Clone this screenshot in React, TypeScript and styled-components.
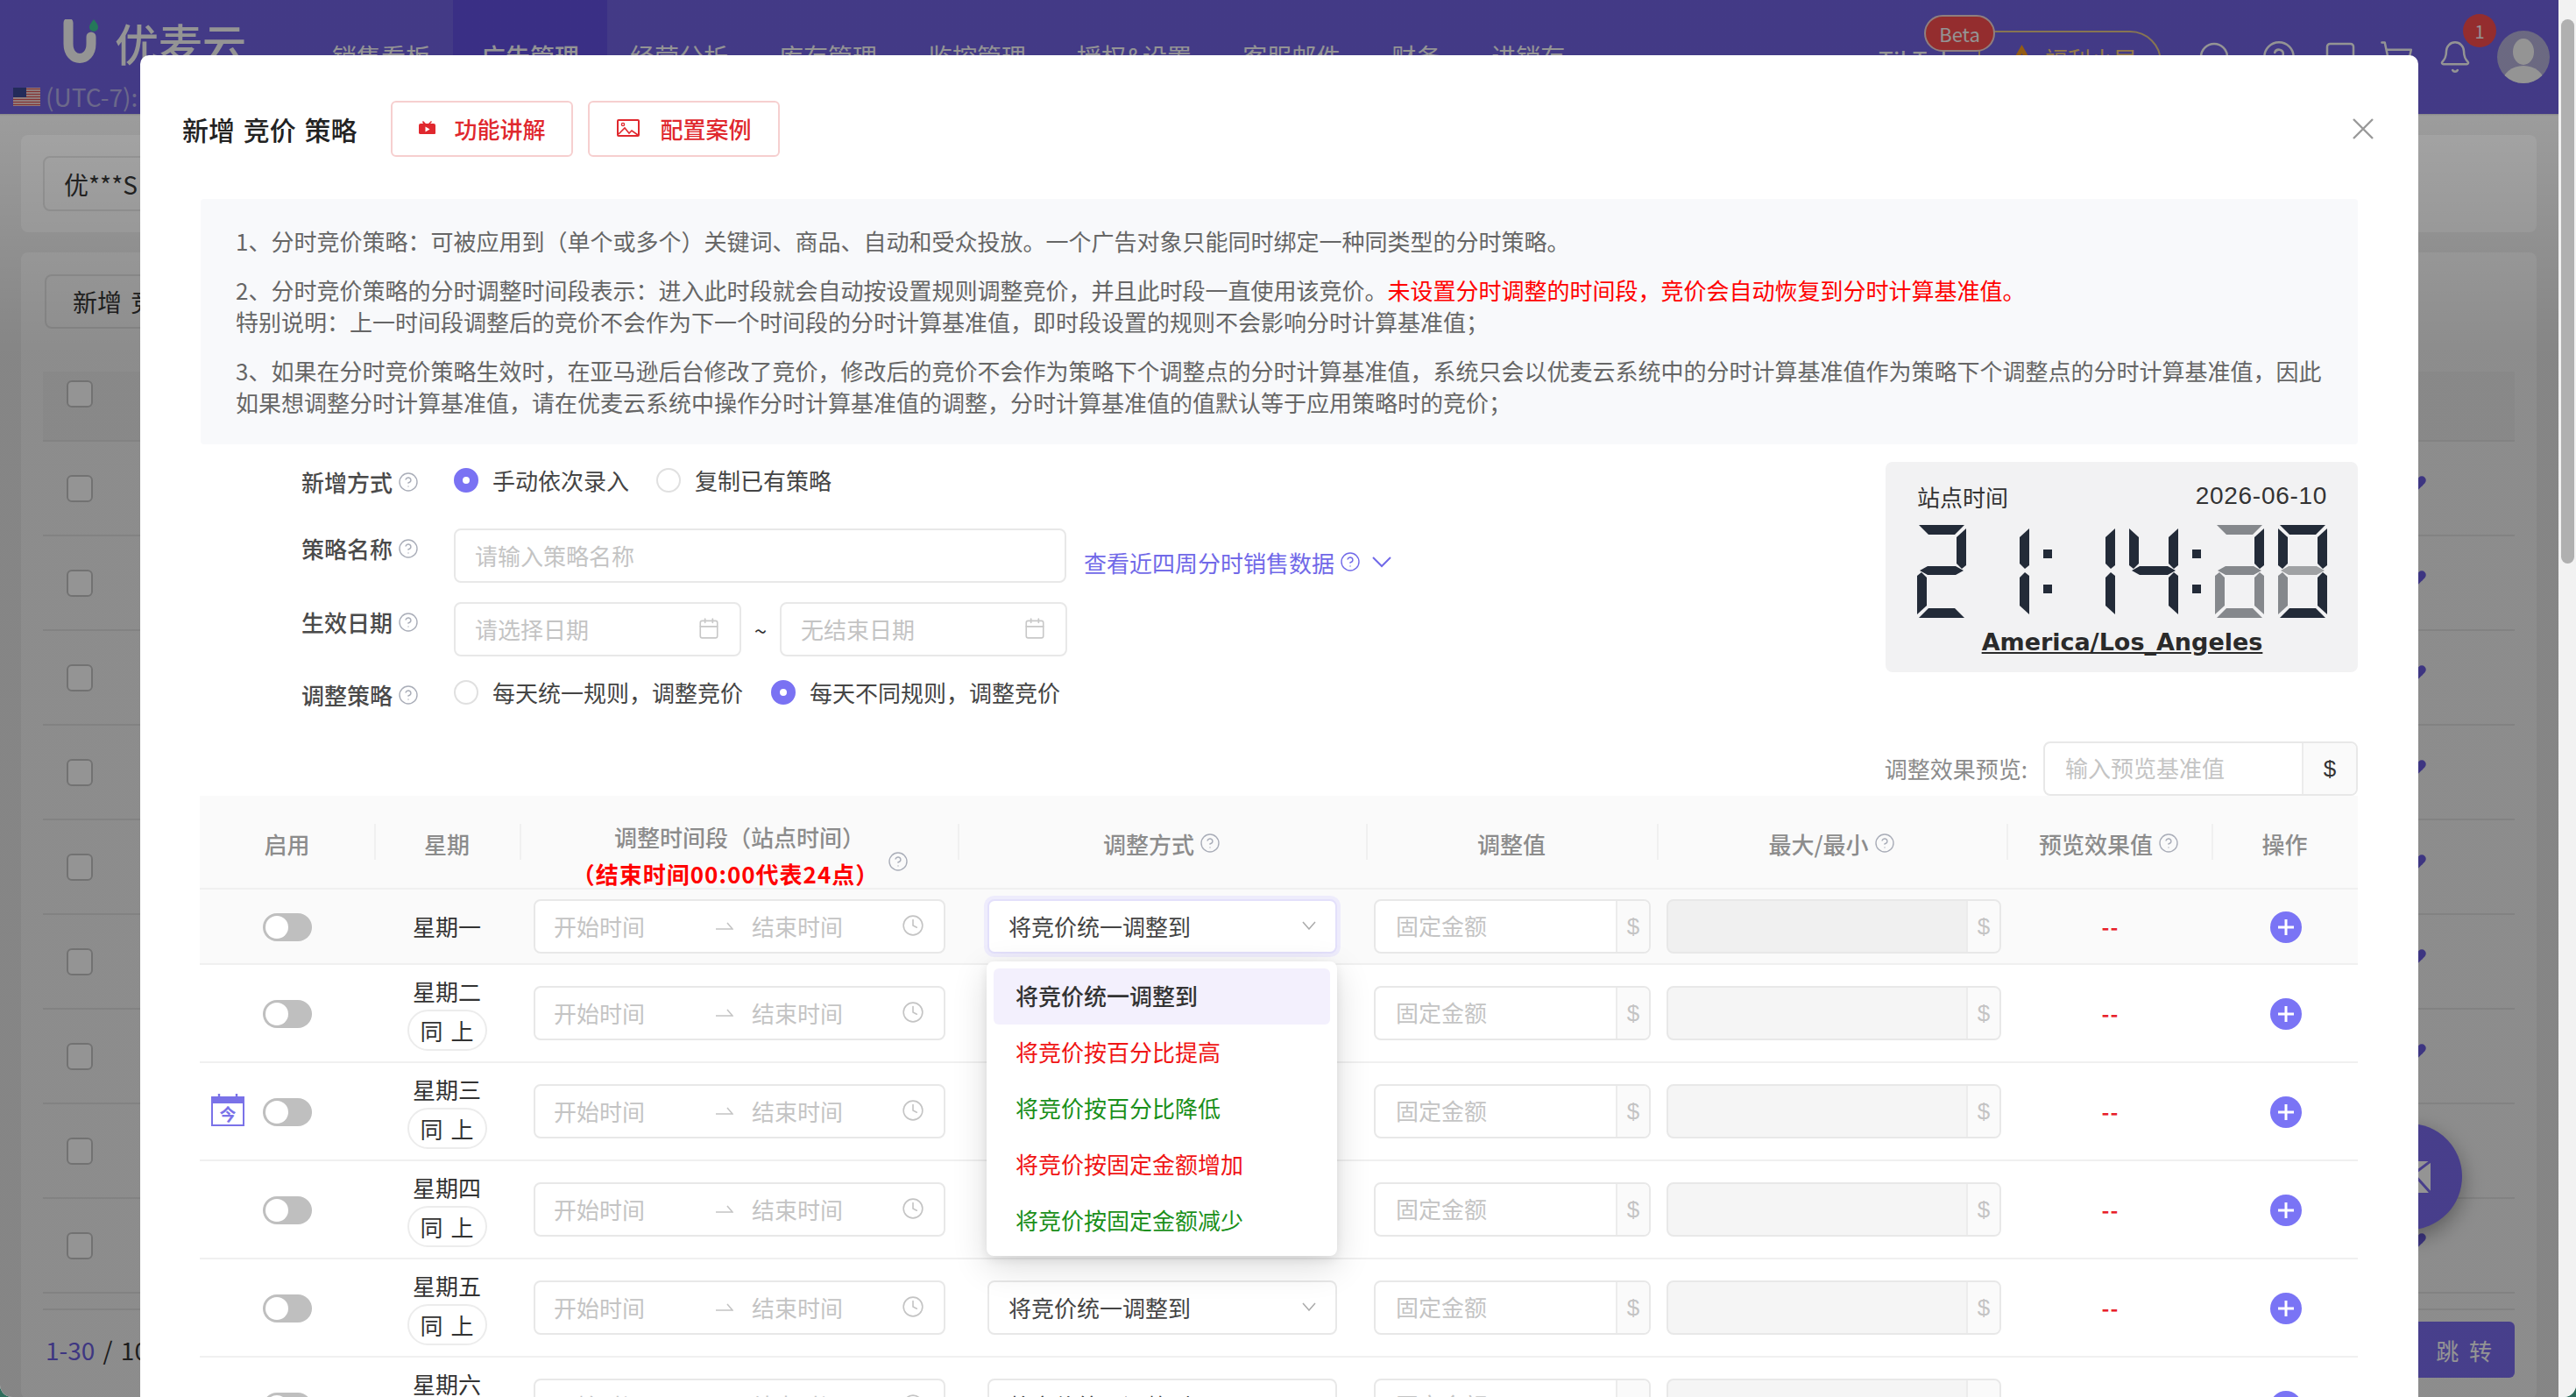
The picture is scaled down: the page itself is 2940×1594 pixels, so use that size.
import React from "react";
import styled, { createGlobalStyle } from "styled-components";
import { Bell, Calendar, CircleHelp, Clock, Headphones, Pencil, ShoppingCart, SquareMinus } from "lucide-react";

const Global = createGlobalStyle`
  html, body { margin: 0; padding: 0; width: 2940px; height: 1594px; overflow: hidden; }
  * { box-sizing: border-box; }
  body { font-family: "Noto Sans CJK SC", "Liberation Sans", sans-serif; font-size: 26px; color: #333; }
`;

const Window = styled.div`
  position: relative; width: 2940px; height: 1594px; overflow: hidden; background: #2f6d5c;
`;
const Screen = styled.div`
  display: grid; grid-template-columns: 2920px 20px; height: 1594px;
  border-radius: 0 0 14px 14px; overflow: hidden; background: #f2f2f2;
`;
const Main = styled.div`position: relative; height: 1594px; overflow: hidden; background: #e6e6e6;`;
const Scrollbar = styled.div`padding: 22px 2px 0 3px; background: #f2f2f2;`;
const ScrollThumb = styled.div`height: 621px; border-radius: 8px; background: #b0b0b0;`;

/* ---------- page behind the dialog ---------- */
const TopBar = styled.header`display: flex; height: 130px; background: #7364e7; color: #fff;`;
const Brand = styled.div`width: 350px; flex: none; display: flex; flex-direction: column;`;
const LogoRow = styled.div`display: flex; align-items: flex-start; gap: 18px; padding: 22px 0 0 72px; height: 90px;`;
const LogoText = styled.span`font-size: 50px; line-height: 52px; font-weight: 500;`;
const ZoneRow = styled.div`display: flex; align-items: center; gap: 6px; padding-left: 15px; font-size: 28px; color: #b9b4ee;`;
const Nav = styled.nav`display: flex; height: 130px;`;
const NavItem = styled.div<{ $active?: boolean }>`
  padding: 46px ${(p) => (p.$active ? 32 : 29)}px 0; margin: 0 ${(p) => (p.$active ? -3 : 0)}px;
  font-size: 28px; line-height: 36px; font-weight: ${(p) => (p.$active ? 500 : 400)};
  background: ${(p) => (p.$active ? "#6451e5" : "transparent")}; white-space: nowrap;
`;
const Tools = styled.div`display: flex; align-items: flex-start; margin-left: auto; padding-right: 10px;`;
const TikTok = styled.span`margin: 50px 0 0 0; font-size: 28px; line-height: 36px; width: 114px; white-space: nowrap;`;
const Welfare = styled.div`
  position: relative; display: flex; align-items: flex-start; gap: 14px; width: 209px; height: 80px; margin: 35px 40px 0 0;
  padding: 12px 0 0 35px; border: 2px solid #e8c98d; border-radius: 0 36px 0 0; color: #ffd27a; font-size: 26px; line-height: 36px;
  white-space: nowrap;
`;
const BetaBadge = styled.span`
  position: absolute; left: -64px; top: -20px; width: 81px; height: 42px; border-radius: 21px;
  display: flex; align-items: center; justify-content: center;
  background: #ff4d4f; border: 2px solid #f6d9d9; color: #fff; font-size: 22px;
`;
const ToolIcons = styled.div`display: flex; padding-top: 45px;`;
const ToolSlot = styled.span<{ $w: number }>`display: block; width: ${(p) => p.$w}px; height: 40px;`;
const BellWrap = styled.span`position: relative; display: block; width: 40px; height: 40px;`;
const BellBadge = styled.span`
  position: absolute; right: -27px; top: -29px; width: 38px; height: 38px; border-radius: 50%;
  display: flex; align-items: center; justify-content: center; background: #ff4d4f; color: #fff; font-size: 20px;
`;
const Avatar = styled.span`
  display: block; width: 60px; height: 60px; margin: 35px 0 0 28px; border-radius: 50%; overflow: hidden; background: #b9b5df;
`;
const BgCard = styled.div<{ $top: number }>`
  margin: ${(p) => p.$top}px 25px 0 24px; padding: 24px 25px; background: #f2f2f2; border-radius: 8px; font-size: 28px;
`;
const BgInput = styled.div`
  width: 320px; height: 63px; padding-left: 22px; display: flex; align-items: center;
  border: 2px solid #dcdcdc; border-radius: 8px; background: #f2f2f2;
`;
const BgButton = styled.div`
  width: 240px; height: 62px; margin: 1px 0 21px 2px; padding-left: 30px; display: flex; align-items: center;
  border: 2px solid #dcdcdc; border-radius: 8px; word-spacing: 4px; white-space: nowrap;
`;
const BgRow = styled.div<{ $head?: boolean }>`
  display: flex; align-items: center; justify-content: space-between; height: 108px; padding: 0 100px 0 27px;
  border-bottom: 2px solid #e0e0e0;
  background: ${(p) => (p.$head ? "linear-gradient(180deg, transparent 28px, #ebebeb 28px)" : "transparent")};
`;
const BgEnd = styled.div`height: 19px; border-bottom: 2px solid #e0e0e0;`;
const BgCheck = styled.span`width: 30px; height: 31px; border: 2px solid #c4c4c4; border-radius: 6px; background: #fff;`;
const BgFooter = styled.div`display: flex; align-items: center; justify-content: space-between; margin: 13px 0 0 3px; font-size: 28px; word-spacing: 3px;`;
const BgPage = styled.span`color: #6a5ddf; & b { color: #333; font-weight: 400; }`;
const JumpButton = styled.span`
  width: 130px; height: 64px; display: flex; align-items: center; justify-content: flex-end; padding-right: 26px;
  border-radius: 6px; background: #7b6cf0; color: #fff; font-size: 26px; word-spacing: 6px;
`;
const Floater = styled.div`
  position: absolute; left: 2689px; top: 1282px; width: 121px; height: 121px; border-radius: 50%;
  display: flex; align-items: center; justify-content: center; background: #7b6af0; box-shadow: 0 8px 24px rgba(0,0,0,.35);
`;
const Dim = styled.div`
  position: absolute; inset: 0;
  background: linear-gradient(180deg, rgba(0,0,0,.42) 130px, rgba(0,0,0,.32) 132px, rgba(0,0,0,.42) 400px);
`;

/* ---------- dialog ---------- */
const Modal = styled.section`
  position: absolute; left: 160px; top: 63px; width: 2600px; height: 1620px; border-radius: 10px; background: #fff;
`;
const ModalHead = styled.div`display: flex; align-items: center; height: 164px; padding: 52px 51px 48px 48px;`;
const Title = styled.h2`margin: 0 38px 0 0; font-size: 30px; line-height: 64px; font-weight: 500; color: #222; word-spacing: 3px;`;
const GhostButton = styled.button<{ $w: number; $gap: number }>`
  display: flex; align-items: center; gap: ${(p) => p.$gap}px; width: ${(p) => p.$w}px; height: 64px; margin-right: 17px;
  padding: 0 0 2px 30px; border: 2px solid #f6cfcf; border-radius: 6px; background: #fff; color: #e0282e;
  font: 500 26px "Noto Sans CJK SC", sans-serif; white-space: nowrap;
`;
const CloseIcon = styled.svg`margin-left: auto; flex: none;`;
const ModalBody = styled.div`padding: 0 69px;`;
const Notice = styled.div`
  height: 280px; padding: 30px 30px 0 40px; background: #f8f9fb; border-radius: 4px; color: #666; font-size: 26px; line-height: 36px;
`;
const NoticeP = styled.p`margin: 0 0 20px; white-space: nowrap;`;
const Red = styled.span`color: #f00;`;
const FormArea = styled.div`display: flex; justify-content: space-between; height: 338px;`;
const FormCol = styled.div`padding: 23px 0 0 115px;`;
const FormRow = styled.div<{ $h: number; $mb: number }>`
  display: flex; align-items: center; height: ${(p) => p.$h}px; margin-bottom: ${(p) => p.$mb}px;
`;
const FormLabel = styled.label<{ $pad: number }>`
  display: flex; align-items: center; gap: 6px; align-self: flex-start; width: 174px; flex: none;
  padding-top: ${(p) => p.$pad}px; font-weight: 500; color: #4a4a4a; line-height: 36px;
`;
const RadioItem = styled.span<{ $mr: number }>`
  display: flex; align-items: center; gap: 16px; margin-right: ${(p) => p.$mr}px; color: #444; white-space: nowrap;
  padding-bottom: 2px;
`;
const RadioDot = styled.span<{ $on?: boolean }>`
  width: 28px; height: 28px; flex: none; border-radius: 50%; background: #fff; margin-top: 2px;
  border: ${(p) => (p.$on ? "10px solid #7a72f3" : "2px solid #e0e0e0")};
`;
const Field = styled.div<{ $w: number }>`
  display: flex; align-items: center; justify-content: space-between; width: ${(p) => p.$w}px; height: 62px; padding: 0 22px 2px;
  border: 2px solid #e8e8e8; border-radius: 8px; background: #fff; color: #c4c4c4; white-space: nowrap;
`;
const Tilde = styled.span`width: 44px; text-align: center; color: #333;`;
const SalesLink = styled.a`
  display: flex; align-items: center; gap: 6px; margin: 14px 0 0 20px; color: #7169e8; white-space: nowrap;
`;
const ClockBox = styled.div`
  width: 539px; height: 240px; margin-top: 20px; padding: 19px 35px 0 36px; border-radius: 8px; background: #f2f2f3; color: #333;
`;
const ClockHead = styled.div`display: flex; align-items: center; justify-content: space-between; height: 40px; margin-bottom: 13px;`;
const ClockDate = styled.span`font: 28px "Liberation Sans", sans-serif; letter-spacing: .7px;`;
const Digits = styled.div`display: flex; gap: 16px; height: 106px;`;
const DigitSvg = styled.svg`display: block; flex: none;`;
const Colon = styled.span`display: flex; flex-direction: column; gap: 30px; padding-top: 28px; width: 10px;`;
const ColonDot = styled.i`display: block; width: 10px; height: 10px; background: #232b38;`;
const Zone = styled.div`
  margin-top: 9px; text-align: center; font: 700 27px/38px "DejaVu Sans", sans-serif; color: #2a2a2a; text-decoration: underline; white-space: nowrap;
`;
const PreviewRow = styled.div`display: flex; align-items: center; justify-content: flex-end; gap: 18px; height: 63px; color: #8c8c8c;`;
const AddonInput = styled.div<{ $w: number; $fill?: boolean }>`
  display: flex; width: ${(p) => p.$w}px; height: 62px; border: 2px solid #e8e8e8; border-radius: 8px; overflow: hidden;
  background: ${(p) => (p.$fill ? "rgba(0,0,0,.04)" : "#fff")}; white-space: nowrap; color: #c4c4c4;
`;
const AddonText = styled.span<{ $pad: number }>`flex: 1; padding-left: ${(p) => p.$pad}px; line-height: 56px;`;
const Addon = styled.span<{ $dark?: boolean; $w: number }>`
  width: ${(p) => p.$w}px; flex: none; text-align: center; line-height: 58px; border-left: 2px solid #ececec;
  background: #fafafa; color: ${(p) => (p.$dark ? "#333" : "#c4c4c4")}; font-family: "Liberation Sans", sans-serif;
`;

const cols = "199px 166px 500px 466px 332px 399px 234px 167px";
const Table = styled.div`width: 2463px; margin-left: -1px;`;
const HeadRow = styled.div`
  display: grid; grid-template-columns: ${cols}; grid-template-rows: 105px; height: 107px; background: #fafafa;
  border-bottom: 2px solid #f0f0f0; color: #8c8c8c; font-weight: 500;
`;
const HeadCell = styled.div<{ $sep?: boolean }>`
  position: relative; display: flex; align-items: center; justify-content: center; gap: 6px; padding-top: 3px; white-space: nowrap;
  ${(p) => p.$sep && `&::before { content: ""; position: absolute; left: 0; top: 32px; height: 41px; width: 2px; background: #f0f0f0; }`}
`;
const TimeHead = styled.div`
  display: flex; flex-direction: column; align-items: center; align-self: flex-start; margin: 23px 0 0 -14px; line-height: 42px;
`;
const TimeHeadTop = styled.span`margin-left: 16px;`;
const TimeHeadHelp = styled.span`position: absolute; left: 420px; top: 63px; line-height: 0;`;
const RedHead = styled.span`color: #f00; font-weight: 700; letter-spacing: 1px; margin-right: 16px;`;
const Row = styled.div<{ $first?: boolean }>`
  display: grid; grid-template-columns: ${cols}; height: ${(p) => (p.$first ? 86 : 112)}px;
  border-bottom: 2px solid #f0f0f0; background: ${(p) => (p.$first ? "#fafafa" : "#fff")};
`;
const Cell = styled.div<{ $pl?: number; $start?: boolean }>`
  position: relative; display: flex; align-items: center; justify-content: ${(p) => (p.$start ? "flex-start" : "center")};
  padding-left: ${(p) => p.$pl ?? 0}px;
`;
const Toggle = styled.span`
  display: block; width: 56px; height: 32px; margin-top: 2px; padding: 3px; border-radius: 16px; background: #bfbfbf;
  &::after { content: ""; display: block; width: 26px; height: 26px; border-radius: 50%; background: #fff; }
`;
const TodayIcon = styled.svg`position: absolute; left: 13px; top: 34px;`;
const Week = styled.div`display: flex; flex-direction: column; align-items: center; gap: 3px; line-height: 36px; color: #333;`;
const Same = styled.span`
  width: 91px; height: 47px; display: flex; align-items: center; justify-content: center; gap: 9px;
  border: 2px solid #ececec; border-radius: 24px; background: #fff; line-height: 1;
`;
const TimeInput = styled.div`
  display: grid; grid-template-columns: 185px 20px 1fr 26px; align-items: center; width: 470px; height: 62px; padding: 0 22px 2px 21px;
  border: 2px solid #e8e8e8; border-radius: 8px; background: #fff; color: #c4c4c4; white-space: nowrap;
`;
const EndText = styled.span`padding-left: 21px;`;
const SelectBox = styled.div<{ $focus?: boolean }>`
  position: relative; display: flex; align-items: center; justify-content: space-between; width: 399px; height: 62px; padding: 0 22px 2px 22px;
  border: 2px solid ${(p) => (p.$focus ? "#e3e0fb" : "#e8e8e8")}; border-radius: 8px; background: #fff; color: #444; white-space: nowrap;
  box-shadow: ${(p) => (p.$focus ? "0 0 0 4px #eeecfc" : "none")};
`;
const Menu = styled.div`
  position: absolute; left: -3px; top: 69px; z-index: 5; width: 400px; padding: 8px; border-radius: 8px; background: #fff;
  box-shadow: 0 12px 40px rgba(0,0,0,.14), 0 4px 12px rgba(0,0,0,.08);
`;
const MenuItem = styled.div<{ $tone: string; $on?: boolean }>`
  height: 64px; padding-left: 25px; line-height: 62px; border-radius: 6px; white-space: nowrap;
  color: ${(p) => p.$tone}; font-weight: ${(p) => (p.$on ? 500 : 400)}; background: ${(p) => (p.$on ? "#f3f0fd" : "transparent")};
`;
const Dash = styled.span`margin-left: 3px; padding-bottom: 2px; color: #e8202a; font-weight: 700; font-size: 24px; letter-spacing: 1px;`;
const Plus = styled.span`
  display: flex; align-items: center; justify-content: center; width: 36px; height: 36px; margin: 2px 0 0 2px; border-radius: 50%; background: #7a74f5;
`;

const SEG: Record<string, string> = {
  t: "2,0 54,0 43,11 13,11",
  ul: "0,4 11,14 11,44 5,50 0,46",
  ur: "56,4 45,14 45,44 51,50 56,46",
  m: "3,52 12,47 44,47 53,52 44,57 12,57",
  ll: "0,58 5,54 11,60 11,92 0,102",
  lr: "56,58 51,54 45,60 45,92 56,102",
  b: "13,95 43,95 54,106 2,106",
};
const D = "#232b38";
const G = "#85888c";
const L = "#a0a2a4";

function Digit({ on }: { on: Record<string, string> }) {
  return (
    <DigitSvg width="56" height="106" viewBox="0 0 56 106">
      {Object.keys(on).map((k) => (
        <polygon key={k} points={SEG[k]} fill={on[k]} />
      ))}
    </DigitSvg>
  );
}

const Help = () => <CircleHelp size={24} color="#a9adb8" strokeWidth={1.4} />;
const CalIcon = () => <Calendar size={26} color="#c8c8c8" strokeWidth={1.5} />;

const weeks = ["星期一", "星期二", "星期三", "星期四", "星期五", "星期六"];
const options = [
  { t: "将竞价统一调整到", c: "#333", on: true },
  { t: "将竞价按百分比提高", c: "#f01414" },
  { t: "将竞价按百分比降低", c: "#1a8f1a" },
  { t: "将竞价按固定金额增加", c: "#f01414" },
  { t: "将竞价按固定金额减少", c: "#1a8f1a" },
];

export default function App() {
  return (
    <Window>
      <Global />
      <Screen>
        <Main>
          <TopBar>
            <Brand>
              <LogoRow>
                <svg width="41" height="50" viewBox="0 0 41 50">
                  <path d="M6 4v24c0 22 26 22 26 0V20" fill="none" stroke="#fff" strokeWidth="11" strokeLinecap="round" />
                  <path d="M35 0c3 4 5 6 5 9a5 5 0 0 1-10 0c0-3 2-5 5-9z" fill="#3fcf9a" />
                </svg>
                <LogoText>优麦云</LogoText>
              </LogoRow>
              <ZoneRow>
                <svg width="31" height="21" viewBox="0 0 31 21">
                  <rect width="31" height="21" fill="#fff" />
                  <path d="M0 1.5h31M0 4.5h31M0 7.5h31M0 10.5h31M0 13.5h31M0 16.5h31M0 19.5h31" stroke="#e25555" strokeWidth="1.6" />
                  <rect width="15" height="11" fill="#3c4a9a" />
                </svg>
                (UTC-7): 09:00
              </ZoneRow>
            </Brand>
            <Nav>
              <NavItem>销售看板</NavItem>
              <NavItem $active>广告管理</NavItem>
              <NavItem>经营分析</NavItem>
              <NavItem>库存管理</NavItem>
              <NavItem>监控管理</NavItem>
              <NavItem>授权&amp;设置</NavItem>
              <NavItem>客服邮件</NavItem>
              <NavItem>财务</NavItem>
              <NavItem>进销存</NavItem>
            </Nav>
            <Tools>
              <TikTok>TikTok</TikTok>
              <Welfare>
                <svg width="25" height="30" viewBox="0 0 25 30" style={{ marginTop: 2 }}>
                  <path d="M12.5 0L25 22h-6l-6.500-12L6 22H0z" fill="#ff9f20" />
                  <path d="M12.500 14l6 10H6.500z" fill="#ff9f20" />
                </svg>
                福利小屋
                <BetaBadge>Beta</BetaBadge>
              </Welfare>
              <ToolIcons>
                <ToolSlot $w={74}>
                  <Headphones size={40} strokeWidth={1.5} />
                </ToolSlot>
                <ToolSlot $w={70}>
                  <CircleHelp size={40} strokeWidth={1.5} />
                </ToolSlot>
                <ToolSlot $w={64}>
                  <SquareMinus size={40} strokeWidth={1.5} />
                </ToolSlot>
                <ToolSlot $w={67}>
                  <ShoppingCart size={40} strokeWidth={1.5} />
                </ToolSlot>
                <BellWrap>
                  <Bell size={40} strokeWidth={1.5} />
                  <BellBadge>1</BellBadge>
                </BellWrap>
              </ToolIcons>
              <Avatar>
                <svg width="60" height="60" viewBox="0 0 60 60">
                  <ellipse cx="30" cy="24" rx="12" ry="15" fill="#fff" />
                  <ellipse cx="30" cy="60" rx="24" ry="20" fill="#fff" />
                </svg>
              </Avatar>
            </Tools>
          </TopBar>
          <BgCard $top={24}>
            <BgInput>优***S</BgInput>
          </BgCard>
          <BgCard $top={23}>
            <BgButton>新增 竞价策略</BgButton>
            {Array.from({ length: 10 }).map((_, i) => (
              <BgRow key={i} $head={i === 0}>
                <BgCheck />
                {i > 0 && <Pencil size={30} color="#6a5ddf" fill="#6a5ddf" />}
              </BgRow>
            ))}
            <BgEnd />
            <BgFooter>
              <BgPage>
                1-30 <b>/ 100</b>
              </BgPage>
              <JumpButton>跳 转</JumpButton>
            </BgFooter>
          </BgCard>
          <Floater>
            <svg width="48" height="36" viewBox="0 0 48 36">
              <rect width="48" height="36" rx="3" fill="#fff" />
              <path d="M0 0l24 18L48 0M0 36l18-20M48 36L30 16" fill="none" stroke="#7b6af0" strokeWidth="3" />
            </svg>
          </Floater>
          <Dim />
          <Modal>
            <ModalHead>
              <Title>新增 竞价 策略</Title>
              <GhostButton $w={208} $gap={22}>
                <svg width="19" height="16" viewBox="0 0 19 16">
                  <path d="M5 0l3 3h3l3-3 1 1-2 2h4a2 2 0 0 1 2 2v9a1 1 0 0 1-1 1H2a2 2 0 0 1-2-1V5a2 2 0 0 1 2-2h3L4 1z" fill="#e0282e" />
                  <path d="M7.5 6.500v6l5-3z" fill="#fff" />
                </svg>
                功能讲解
              </GhostButton>
              <GhostButton $w={219} $gap={24}>
                <svg width="26" height="20" viewBox="0 0 26 20" style={{ marginLeft: 1 }}>
                  <rect x="1" y="1" width="24" height="18" rx="1" fill="none" stroke="#e0282e" strokeWidth="2" />
                  <circle cx="7" cy="6" r="1.6" fill="none" stroke="#e0282e" strokeWidth="1.4" />
                  <path d="M2 17l7-7 5 6 3-3 7 5" fill="none" stroke="#e0282e" strokeWidth="1.6" />
                </svg>
                配置案例
              </GhostButton>
              <CloseIcon width="24" height="24" viewBox="0 0 24 24">
                <path d="M1 1l22 22M23 1L1 23" stroke="#999" strokeWidth="2.4" fill="none" />
              </CloseIcon>
            </ModalHead>
            <ModalBody>
              <Notice>
                <NoticeP>1、分时竞价策略：可被应用到（单个或多个）关键词、商品、自动和受众投放。一个广告对象只能同时绑定一种同类型的分时策略。</NoticeP>
                <NoticeP>
                  2、分时竞价策略的分时调整时间段表示：进入此时段就会自动按设置规则调整竞价，并且此时段一直使用该竞价。
                  <Red>未设置分时调整的时间段，竞价会自动恢复到分时计算基准值。</Red>
                  <br />
                  特别说明：上一时间段调整后的竞价不会作为下一个时间段的分时计算基准值，即时段设置的规则不会影响分时计算基准值；
                </NoticeP>
                <NoticeP>
                  3、如果在分时竞价策略生效时，在亚马逊后台修改了竞价，修改后的竞价不会作为策略下个调整点的分时计算基准值，系统只会以优麦云系统中的分时计算基准值作为策略下个调整点的分时计算基准值，因此
                  <br />
                  如果想调整分时计算基准值，请在优麦云系统中操作分时计算基准值的调整，分时计算基准值的值默认等于应用策略时的竞价；
                </NoticeP>
              </Notice>
              <FormArea>
                <FormCol>
                  <FormRow $h={36} $mb={37}>
                    <FormLabel $pad={2}>
                      新增方式 <Help />
                    </FormLabel>
                    <RadioItem $mr={31}>
                      <RadioDot $on />
                      手动依次录入
                    </RadioItem>
                    <RadioItem $mr={0}>
                      <RadioDot />
                      复制已有策略
                    </RadioItem>
                  </FormRow>
                  <FormRow $h={62} $mb={22}>
                    <FormLabel $pad={5}>
                      策略名称 <Help />
                    </FormLabel>
                    <Field $w={699}>请输入策略名称</Field>
                    <SalesLink>
                      查看近四周分时销售数据
                      <CircleHelp size={24} color="#7169e8" strokeWidth={1.4} />
                      <svg width="24" height="14" viewBox="0 0 24 14" style={{ marginLeft: 6 }}>
                        <path d="M2 2l10 10L22 2" fill="none" stroke="#7169e8" strokeWidth="2" />
                      </svg>
                    </SalesLink>
                  </FormRow>
                  <FormRow $h={62} $mb={23}>
                    <FormLabel $pad={5}>
                      生效日期 <Help />
                    </FormLabel>
                    <Field $w={328}>
                      请选择日期
                      <CalIcon />
                    </Field>
                    <Tilde>~</Tilde>
                    <Field $w={328}>
                      无结束日期
                      <CalIcon />
                    </Field>
                  </FormRow>
                  <FormRow $h={36} $mb={0}>
                    <FormLabel $pad={3}>
                      调整策略 <Help />
                    </FormLabel>
                    <RadioItem $mr={32}>
                      <RadioDot />
                      每天统一规则，调整竞价
                    </RadioItem>
                    <RadioItem $mr={0}>
                      <RadioDot $on />
                      每天不同规则，调整竞价
                    </RadioItem>
                  </FormRow>
                </FormCol>
                <ClockBox>
                  <ClockHead>
                    站点时间
                    <ClockDate>2026-06-10</ClockDate>
                  </ClockHead>
                  <Digits>
                    <Digit on={{ t: D, ur: D, m: D, ll: D, b: D }} />
                    <Digit on={{ ur: D, lr: D }} />
                    <Colon>
                      <ColonDot />
                      <ColonDot />
                    </Colon>
                    <Digit on={{ ur: D, lr: D }} />
                    <Digit on={{ ul: D, ur: D, m: D, lr: D }} />
                    <Colon>
                      <ColonDot />
                      <ColonDot />
                    </Colon>
                    <Digit on={{ t: G, ur: D, m: G, ll: G, lr: G, b: G }} />
                    <Digit on={{ t: D, ul: D, ur: D, m: L, ll: G, lr: D, b: D }} />
                  </Digits>
                  <Zone>America/Los_Angeles</Zone>
                </ClockBox>
              </FormArea>
              <PreviewRow>
                调整效果预览:
                <AddonInput $w={359}>
                  <AddonText $pad={23}>输入预览基准值</AddonText>
                  <Addon $dark $w={62}>$</Addon>
                </AddonInput>
              </PreviewRow>
              <Table>
                <HeadRow>
                  <HeadCell>启用</HeadCell>
                  <HeadCell $sep>星期</HeadCell>
                  <HeadCell $sep>
                    <TimeHead>
                      <TimeHeadTop>调整时间段（站点时间）</TimeHeadTop>
                      <RedHead>（结束时间00:00代表24点）</RedHead>
                    </TimeHead>
                    <TimeHeadHelp>
                      <Help />
                    </TimeHeadHelp>
                  </HeadCell>
                  <HeadCell $sep>
                    调整方式 <Help />
                  </HeadCell>
                  <HeadCell $sep>调整值</HeadCell>
                  <HeadCell $sep>
                    最大/最小 <Help />
                  </HeadCell>
                  <HeadCell $sep>
                    预览效果值 <Help />
                  </HeadCell>
                  <HeadCell $sep>操作</HeadCell>
                </HeadRow>
                {weeks.map((w, i) => (
                  <Row key={w} $first={i === 0}>
                    <Cell>
                      {i === 2 && (
                        <TodayIcon width="38" height="38" viewBox="0 0 38 38">
                          <rect x="1" y="5" width="36" height="32" fill="#fff" stroke="#7a72e8" strokeWidth="2" />
                          <rect x="1" y="5" width="36" height="7" fill="#7a72e8" />
                          <path d="M9 1v8M29 1v8" stroke="#7a72e8" strokeWidth="2.4" />
                          <text x="19" y="32" textAnchor="middle" fontSize="19" fontWeight="700" fill="#7a72e8">今</text>
                        </TodayIcon>
                      )}
                      <Toggle />
                    </Cell>
                    <Cell>
                      <Week>
                        {w}
                        {i > 0 && (
                          <Same>
                            <span>同</span>
                            <span>上</span>
                          </Same>
                        )}
                      </Week>
                    </Cell>
                    <Cell $start $pl={16}>
                      <TimeInput>
                        开始时间
                        <svg width="20" height="12" viewBox="0 0 20 12">
                          <path d="M0 10h19L13 3" fill="none" stroke="#c4c4c4" strokeWidth="1.6" />
                        </svg>
                        <EndText>结束时间</EndText>
                        <Clock size={26} color="#c4c4c4" strokeWidth={1.5} />
                      </TimeInput>
                    </Cell>
                    <Cell $start $pl={34}>
                      <SelectBox $focus={i === 0}>
                        {(i === 0 || i > 3) && <span>将竞价统一调整到</span>}
                        <svg width="16" height="10" viewBox="0 0 16 10">
                          <path d="M1 1l7 8 7-8" fill="none" stroke="#aaa" strokeWidth="1.5" />
                        </svg>
                        {i === 0 && (
                          <Menu>
                            {options.map((o) => (
                              <MenuItem key={o.t} $tone={o.c} $on={o.on}>
                                {o.t}
                              </MenuItem>
                            ))}
                          </Menu>
                        )}
                      </SelectBox>
                    </Cell>
                    <Cell $start $pl={9}>
                      <AddonInput $w={316}>
                        <AddonText $pad={23}>固定金额</AddonText>
                        <Addon $w={38}>$</Addon>
                      </AddonInput>
                    </Cell>
                    <Cell $start $pl={11}>
                      <AddonInput $w={382} $fill>
                        <AddonText $pad={0} />
                        <Addon $w={38}>$</Addon>
                      </AddonInput>
                    </Cell>
                    <Cell>
                      <Dash>--</Dash>
                    </Cell>
                    <Cell>
                      <Plus>
                        <svg width="20" height="20" viewBox="0 0 20 20">
                          <path d="M10 1v18M1 10h18" stroke="#fff" strokeWidth="3" />
                        </svg>
                      </Plus>
                    </Cell>
                  </Row>
                ))}
              </Table>
            </ModalBody>
          </Modal>
        </Main>
        <Scrollbar>
          <ScrollThumb />
        </Scrollbar>
      </Screen>
    </Window>
  );
}
